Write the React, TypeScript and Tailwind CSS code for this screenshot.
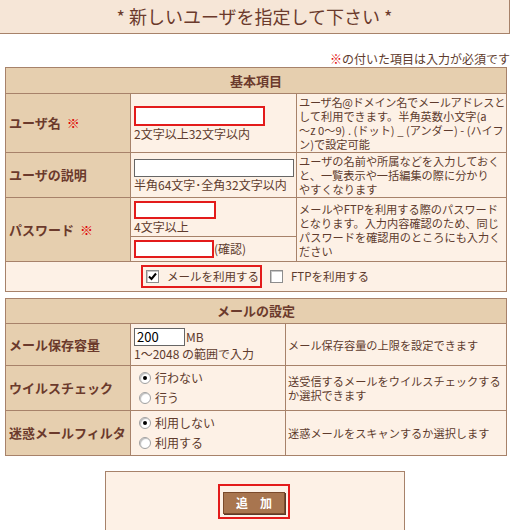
import type { ReactNode } from 'react';

const font = "font-['Noto_Sans_CJK_JP','Noto_Sans',sans-serif]";

function Req() {
  return <span className="ml-[6px] text-[#e00000]">※</span>;
}

function Check({ checked }: { checked: boolean }) {
  return (
    <span className="inline-flex h-[13px] w-[13px] shrink-0 items-center justify-center border border-[#8d8d8d] bg-white shadow-[inset_1px_1px_0_#c8c8c8]">
      {checked && (
        <svg width="9" height="9" viewBox="0 0 9 9">
          <path d="M1 4.5 L3.5 7 L8 1.5" fill="none" stroke="#000" strokeWidth="2" />
        </svg>
      )}
    </span>
  );
}

function Radio({ checked, label }: { checked: boolean; label: string }) {
  return (
    <div className="flex h-[20px] items-center gap-[4px]">
      <span className="flex h-[12px] w-[12px] items-center justify-center rounded-full border border-[#a0a0a0] bg-white shadow-[inset_1px_1px_1px_#bdbdbd]">
        {checked && <span className="h-[4px] w-[4px] rounded-full bg-black" />}
      </span>
      <span>{label}</span>
    </div>
  );
}

function Label({ children, rowSpan }: { children: ReactNode; rowSpan?: number }) {
  return (
    <td
      rowSpan={rowSpan}
      className="border border-[#a7826a] bg-[#e6cfaf] px-[3px] align-middle text-[13px] font-bold text-[#6b3a2c]"
    >
      {children}
    </td>
  );
}

function Desc({ children, rowSpan }: { children: ReactNode; rowSpan?: number }) {
  return (
    <td
      rowSpan={rowSpan}
      className="whitespace-nowrap border border-[#a7826a] px-[2px] py-[1px] align-middle text-[11.2px] leading-[14px]"
    >
      {children}
    </td>
  );
}

export default function App() {
  return (
    <div className={`w-[511px] h-[530px] overflow-hidden bg-white text-[#5e3b2d] ${font}`}>
      <div className="flex h-[34px] w-[510px] items-center justify-center border-r border-b border-[#a7826a] bg-[#f6e6d7] text-[18px] text-[#6b3a2c]">
        * 新しいユーザを指定して下さい *
      </div>

      <div className="mt-[16px] h-[17px] pr-[1px] text-right text-[12px] leading-[17px]">
        <span className="text-[#e00000]">※</span>の付いた項目は入力が必須です
      </div>

      <table className="ml-[5px] w-[501px] table-fixed border-collapse bg-[#fdf1e6] text-[12px]">
        <colgroup>
          <col className="w-[125px]" />
          <col className="w-[166px]" />
          <col className="w-[210px]" />
        </colgroup>
        <tbody>
          <tr className="h-[26px]">
            <th colSpan={3} className="border border-[#a7826a] bg-[#e6cfaf] text-center text-[13px] font-bold text-[#6b3a2c]">
              基本項目
            </th>
          </tr>
          <tr className="h-[58px]">
            <Label>
              ユーザ名<Req />
            </Label>
            <td className="border border-[#a7826a] px-[3px] align-middle">
              <input className="block h-[20px] w-[131px] border-2 border-[#e31b1b] bg-white outline-none" />
              <div className="mt-[1px] leading-[14px]">2文字以上32文字以内</div>
            </td>
            <Desc>
              <span className="tracking-[-0.3px]">ユーザ名@ドメイン名でメールアドレスと</span>
              <br />
              して利用できます。半角英数小文字(a
              <br />
              ～z 0～9) . (ドット) _ (アンダー) - (ハイフ
              <br />
              ン)で設定可能
            </Desc>
          </tr>
          <tr className="h-[44px]">
            <Label>ユーザの説明</Label>
            <td className="border border-[#a7826a] px-[3px] align-middle">
              <input className="block h-[18px] w-[160px] border border-[#666] bg-white outline-none" />
              <div className="mt-[1px] whitespace-nowrap leading-[14px]">半角64文字･全角32文字以内</div>
            </td>
            <Desc>
              ユーザの名前や所属などを入力しておく
              <br />
              と、一覧表示や一括編集の際に分かり
              <br />
              やすくなります
            </Desc>
          </tr>
          <tr className="h-[39px]">
            <Label rowSpan={2}>
              パスワード<Req />
            </Label>
            <td className="border border-[#a7826a] px-[3px] align-middle">
              <input type="password" className="block h-[18px] w-[82px] border-2 border-[#e31b1b] bg-white outline-none" />
              <div className="mt-[1px] leading-[14px]">4文字以上</div>
            </td>
            <Desc rowSpan={2}>
              メールやFTPを利用する際のパスワード
              <br />
              となります。入力内容確認のため、同じ
              <br />
              パスワードを確認用のところにも入力く
              <br />
              ださい
            </Desc>
          </tr>
          <tr className="h-[25px]">
            <td className="border border-[#a7826a] px-[3px] align-middle">
              <div className="flex items-center">
                <input type="password" className="block h-[18px] w-[80px] border-2 border-[#e31b1b] bg-white outline-none" />
                <span>(確認)</span>
              </div>
            </td>
          </tr>
          <tr className="h-[30px]">
            <td colSpan={3} className="border border-[#a7826a] align-middle">
              <div className="flex items-center justify-center gap-[8px] pr-[2px]">
                <div className="flex h-[23px] items-center gap-[8px] border-2 border-[#e31b1b] pl-[3px] pr-[1px]">
                  <Check checked />
                  <span className="text-[11.5px]">メールを利用する</span>
                </div>
                <div className="flex items-center gap-[8px]">
                  <Check checked={false} />
                  <span className="text-[11.5px]">FTPを利用する</span>
                </div>
              </div>
            </td>
          </tr>
        </tbody>
      </table>

      <table className="mt-[6px] ml-[5px] w-[501px] table-fixed border-collapse bg-[#fdf1e6] text-[12px]">
        <colgroup>
          <col className="w-[125px]" />
          <col className="w-[155px]" />
          <col className="w-[221px]" />
        </colgroup>
        <tbody>
          <tr className="h-[25px]">
            <th colSpan={3} className="border border-[#a7826a] bg-[#e6cfaf] text-center text-[13px] font-bold text-[#6b3a2c]">
              メールの設定
            </th>
          </tr>
          <tr className="h-[42px]">
            <Label>メール保存容量</Label>
            <td className="border border-[#a7826a] px-[3px] align-middle">
              <div className="flex items-center gap-[1px]">
                <input defaultValue="200" className="block h-[18px] w-[51px] border border-[#666] bg-white px-[2px] text-[13px] text-black outline-none" />
                <span>MB</span>
              </div>
              <div className="mt-[1px] leading-[14px]">1～2048 の範囲で入力</div>
            </td>
            <Desc>メール保存容量の上限を設定できます</Desc>
          </tr>
          <tr className="h-[45px]">
            <Label>ウイルスチェック</Label>
            <td className="border border-[#a7826a] px-[8px] align-middle">
              <Radio checked label="行わない" />
              <Radio checked={false} label="行う" />
            </td>
            <Desc>
              送受信するメールをウイルスチェックする
              <br />
              か選択できます
            </Desc>
          </tr>
          <tr className="h-[45px]">
            <Label>迷惑メールフィルタ</Label>
            <td className="border border-[#a7826a] px-[8px] align-middle">
              <Radio checked label="利用しない" />
              <Radio checked={false} label="利用する" />
            </td>
            <Desc>迷惑メールをスキャンするか選択します</Desc>
          </tr>
        </tbody>
      </table>

      <div className="mt-[15px] ml-[105px] flex h-[60px] w-[300px] items-center justify-center border border-[#a7826a] bg-[#fdf1e6] pr-[2px]">
        <div className="border-2 border-[#e31b1b] p-[3px]">
          <button className="h-[22px] w-[62px] whitespace-nowrap border border-[#7b4a2b] bg-[#a8754f] text-[12px] font-bold text-white shadow-[1px_1px_0_#5a3a2a]">
            追　加
          </button>
        </div>
      </div>
    </div>
  );
}
